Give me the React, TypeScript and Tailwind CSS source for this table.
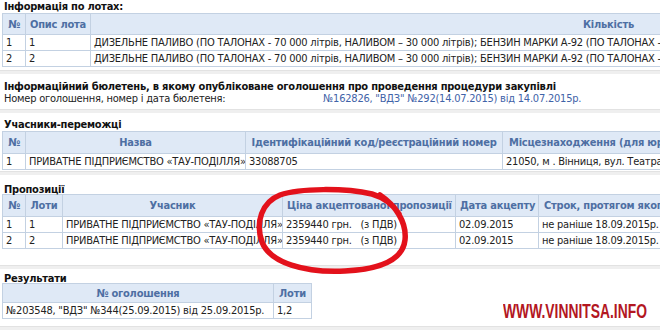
import React from 'react';

const font = { fontFamily: '"DejaVu Sans Condensed", "DejaVu Sans", sans-serif' };

const th =
  'border border-[#c3d1e2] bg-[#dfe9f6] text-[#4e6fa3] font-bold text-center px-[4px] py-0 whitespace-nowrap overflow-hidden';
const td = 'border border-[#c3d1e2] bg-white px-[3px] py-0 whitespace-nowrap overflow-hidden text-[#222]';

const Separator: React.FC<{ className?: string }> = ({ className = '' }) => (
  <div className={`h-[4px] border-t border-[#e2e2e2] bg-[#efefef] ${className}`} />
);

const Title: React.FC<{ children: React.ReactNode; className?: string }> = ({ children, className = '' }) => (
  <div className={`pl-[4px] font-bold text-[#111] whitespace-nowrap ${className}`}>{children}</div>
);

const lotText =
  'ДИЗЕЛЬНЕ ПАЛИВО (ПО ТАЛОНАХ - 70 000 літрів, НАЛИВОМ – 30 000 літрів); БЕНЗИН МАРКИ А-92 (ПО ТАЛОНАХ - 30 000 літрів, НАЛИВОМ – 10 000 літрів)';

export default function App() {
  return (
    <div
      className="relative w-[660px] h-[332px] overflow-hidden bg-white text-[11px] leading-[13px] tracking-[-0.22px]"
      style={font}
    >
      {/* Інформація по лотах */}
      <Title className="h-[13px]">Інформація по лотах:</Title>
      <table className="ml-[2px] border-collapse table-fixed w-[1124px]">
        <colgroup>
          <col className="w-[23px]" />
          <col className="w-[65px]" />
          <col className="w-[1036px]" />
        </colgroup>
        <thead>
          <tr className="h-[21px]">
            <th className={th}>№</th>
            <th className={th}>Опис лота</th>
            <th className={th}>Кількість</th>
          </tr>
        </thead>
        <tbody>
          {[1, 2].map((n) => (
            <tr key={n} className="h-[16px]">
              <td className={td}>{n}</td>
              <td className={td}>{n}</td>
              <td className={td}>{lotText}</td>
            </tr>
          ))}
        </tbody>
      </table>
      <Separator className="mt-[3px]" />

      {/* Бюлетень */}
      <Title className="mt-[6px] h-[12px]">
        Інформаційний бюлетень, в якому опубліковане оголошення про проведення процедури закупівлі
      </Title>
      <div className="flex h-[13px] whitespace-nowrap text-[#222]">
        <span className="pl-[4px] w-[323px]">Номер оголошення, номер і дата бюлетеня:</span>
        <span className="text-[#3f63a8]">№162826, "ВДЗ" №292(14.07.2015) від 14.07.2015р.</span>
      </div>
      <Separator className="mt-[4px]" />

      {/* Учасники-переможці */}
      <Title className="mt-[5px] h-[13px]">Учасники-переможці</Title>
      <table className="ml-[2px] border-collapse table-fixed w-[758px]">
        <colgroup>
          <col className="w-[23px]" />
          <col className="w-[220px]" />
          <col className="w-[257px]" />
          <col className="w-[258px]" />
        </colgroup>
        <thead>
          <tr className="h-[22px]">
            <th className={th}>№</th>
            <th className={th}>Назва</th>
            <th className={th}>Ідентифікаційний код/реєстраційний номер</th>
            <th className={`${th} text-left pl-[6px]`}>Місцезнаходження (для юридичних осіб)</th>
          </tr>
        </thead>
        <tbody>
          <tr className="h-[16px]">
            <td className={td}>1</td>
            <td className={td}>ПРИВАТНЕ ПІДПРИЄМСТВО «ТАУ-ПОДІЛЛЯ»</td>
            <td className={td}>33088705</td>
            <td className={td}>21050, м . Вінниця, вул. Театральна</td>
          </tr>
        </tbody>
      </table>
      <Separator className="mt-[1px]" />

      {/* Пропозиції */}
      <Title className="mt-[8px] h-[11px]">Пропозиції</Title>
      <table className="ml-[2px] border-collapse table-fixed w-[798px]">
        <colgroup>
          <col className="w-[23px]" />
          <col className="w-[37px]" />
          <col className="w-[220px]" />
          <col className="w-[173px]" />
          <col className="w-[83px]" />
          <col className="w-[262px]" />
        </colgroup>
        <thead>
          <tr className="h-[22px]">
            <th className={th}>№</th>
            <th className={th}>Лоти</th>
            <th className={th}>Учасник</th>
            <th className={th}>Ціна акцептованої пропозиції</th>
            <th className={th}>Дата акцепту</th>
            <th className={`${th} text-left pl-[5px]`}>Строк, протягом якого укладається договір</th>
          </tr>
        </thead>
        <tbody>
          {[1, 2].map((n) => (
            <tr key={n} className="h-[16px]">
              <td className={td}>{n}</td>
              <td className={td}>{n}</td>
              <td className={td}>ПРИВАТНЕ ПІДПРИЄМСТВО «ТАУ-ПОДІЛЛЯ»</td>
              <td className={`${td} whitespace-pre`}>{'2359440 грн.   (з ПДВ)'}</td>
              <td className={td}>02.09.2015</td>
              <td className={td}>не раніше 18.09.2015р.</td>
            </tr>
          ))}
        </tbody>
      </table>
      <Separator className="mt-[16px]" />

      {/* Результати */}
      <Title className="mt-[3px] h-[11px]">Результати</Title>
      <table className="ml-[2px] border-collapse table-fixed w-[309px]">
        <colgroup>
          <col className="w-[271px]" />
          <col className="w-[38px]" />
        </colgroup>
        <thead>
          <tr className="h-[19px]">
            <th className={th}>№ оголошення</th>
            <th className={th}>Лоти</th>
          </tr>
        </thead>
        <tbody>
          <tr className="h-[16px]">
            <td className={`${td} text-[#3f63a8]`}>№203548, "ВДЗ" №344(25.09.2015) від 25.09.2015р.</td>
            <td className={td}>1,2</td>
          </tr>
        </tbody>
      </table>
      <Separator className="mt-[7px]" />

      {/* hand-drawn red circle */}
      <svg className="absolute left-0 top-0 pointer-events-none" width="660" height="332" viewBox="0 0 660 332">
        <path
          d="M 380 195 C 395 205, 407 222, 405 240 C 403 258, 385 269, 345 271 C 305 273, 270 263, 262 242 C 255 222, 262 202, 280 195 C 300 188, 345 188, 372 194 C 386 198, 394 206, 399 214"
          fill="none"
          stroke="#e3111b"
          strokeWidth="5.5"
          strokeLinecap="round"
        />
      </svg>

      {/* watermark */}
      <div
        className="absolute left-[503px] top-[299px] origin-left scale-x-[0.66] text-[21px] leading-[24px] font-bold text-[#b3171f] tracking-normal whitespace-nowrap"
        style={{ fontFamily: '"Liberation Sans", Arial, sans-serif' }}
      >
        WWW.VINNITSA.INFO
      </div>
    </div>
  );
}
